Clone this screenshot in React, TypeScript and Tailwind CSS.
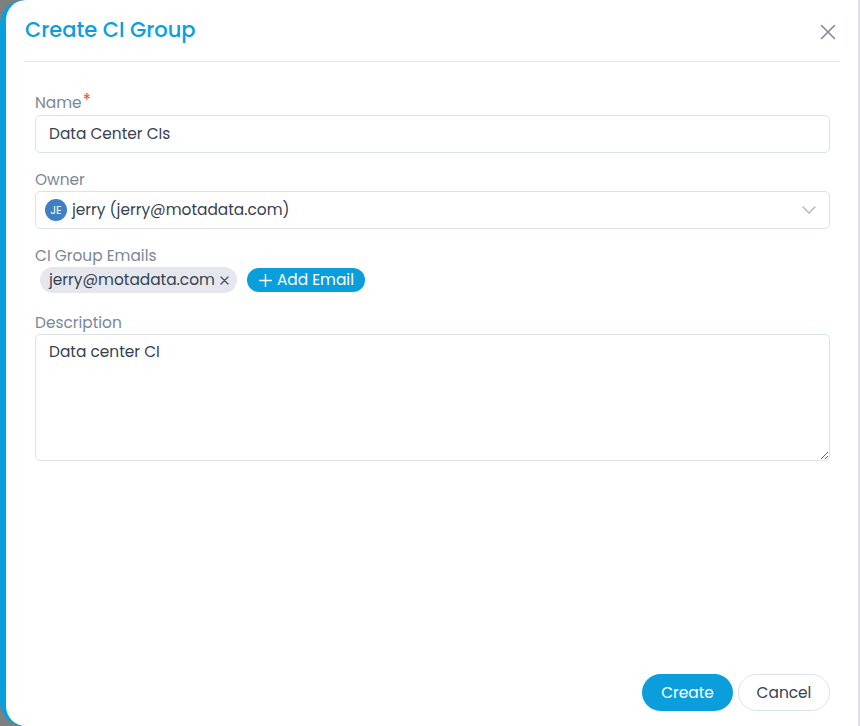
import React from 'react';

const font = { fontFamily: 'Poppins, Inter, "Noto Sans", sans-serif' };

function CloseIcon() {
  return (
    <svg width="16" height="16" viewBox="0 0 16 16" fill="none" stroke="#7d8b9b" strokeWidth="1.6" strokeLinecap="round">
      <path d="M1.5 1.5 L14.5 14.5 M14.5 1.5 L1.5 14.5" />
    </svg>
  );
}

function Chevron() {
  return (
    <svg width="14" height="8" viewBox="0 0 14 8" fill="none" stroke="#a8b3c1" strokeWidth="1.2" strokeLinecap="round" strokeLinejoin="round">
      <path d="M1 1 L7 7 L13 1" />
    </svg>
  );
}

function Label({ children, required }: { children: React.ReactNode; required?: boolean }) {
  return (
    <div className="text-[15.4px] leading-5 text-[#7b8797] flex items-start">
      {children}
      {required && <span className="text-[#e5483d] text-[17px] leading-[14px] ml-[1px]">*</span>}
    </div>
  );
}

export default function App() {
  return (
    <div className="h-[726px] w-[860px] bg-[#7f7f7f]" style={font}>
      <div className="h-full rounded-l-[24px] bg-[#0a9fdc] pl-[6px]">
        <div className="h-full rounded-l-[20px] bg-white border-r-2 border-[#dfe2e8] flex flex-col">
          {/* Header */}
          <div className="mx-[18px] h-[62px] flex items-center justify-between border-b border-[#e1e4ec] pb-[2px]">
            <h1 className="pl-[1px] text-[21px] font-medium text-[#0a9fdc]">Create CI Group</h1>
            <button className="mr-[4px] mt-[4px]">
              <CloseIcon />
            </button>
          </div>

          {/* Body */}
          <div className="flex-1 pl-[29px] pr-[28px] pt-[31px]">
            <Label required>Name</Label>
            <div className="mt-[2px] h-[38px] rounded-[5px] border border-[#dde3ec] flex items-center px-[13px] text-[15.4px] text-[#364152]">
              Data Center CIs
            </div>

            <div className="mt-[17px]">
              <Label>Owner</Label>
            </div>
            <div className="mt-[1px] h-[38px] rounded-[5px] border border-[#dde3ec] flex items-center pl-[9px] pr-[13px] text-[15.4px] text-[#364152]">
              <span className="w-[22px] h-[22px] rounded-full bg-[#3f7fc4] text-white text-[11px] flex items-center justify-center mr-[5px]">JE</span>
              <span className="flex-1">jerry (jerry@motadata.com)</span>
              <Chevron />
            </div>

            <div className="mt-[17px]">
              <Label>CI Group Emails</Label>
            </div>
            <div className="mt-[1px] flex items-center gap-[10px] pl-[5px]">
              <span className="h-[26px] rounded-full bg-[#e4e8ee] pl-[9px] pr-[8px] flex items-center gap-[5px] text-[15.4px] text-[#364152]">
                jerry@motadata.com
                <svg width="9" height="9" viewBox="0 0 9 9" stroke="#4a5463" strokeWidth="1.4" strokeLinecap="round">
                  <path d="M1 1 L8 8 M8 1 L1 8" />
                </svg>
              </span>
              <button className="h-[24px] rounded-full bg-[#0a9fdc] pl-[12px] pr-[11px] flex items-center gap-[5px] text-[15.4px] text-white">
                <svg width="13" height="13" viewBox="0 0 13 13" stroke="white" strokeWidth="1.4" strokeLinecap="round">
                  <path d="M6.5 0.5 V12.5 M0.5 6.5 H12.5" />
                </svg>
                Add Email
              </button>
            </div>

            <div className="mt-[20px]">
              <Label>Description</Label>
            </div>
            <textarea
              readOnly
              defaultValue="Data center CI"
              className="mt-[1px] block w-full h-[127px] rounded-[5px] border border-[#dde3ec] px-[13px] py-[5px] text-[15.4px] text-[#364152] outline-none resize-y"
              style={font}
            />
          </div>

          {/* Footer */}
          <div className="flex justify-end gap-[5px] pr-[28px] pb-[15px]">
            <button className="h-[37px] w-[91px] rounded-full bg-[#0a9fdc] text-white text-[15.4px]">Create</button>
            <button className="h-[37px] w-[92px] rounded-full border border-[#dde3ec] text-[#364152] text-[15.4px]">Cancel</button>
          </div>
        </div>
      </div>
    </div>
  );
}
